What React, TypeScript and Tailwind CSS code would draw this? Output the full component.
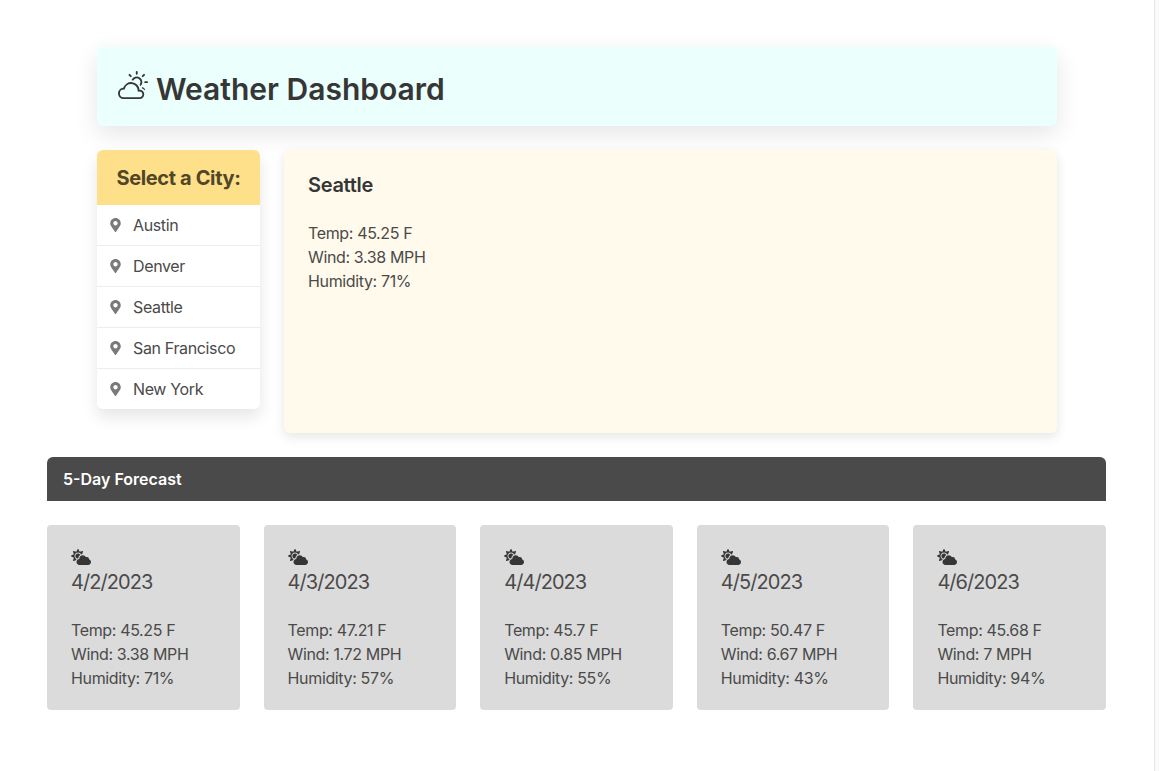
import { BsCloudSun } from "react-icons/bs";
import { FaCloudSun, FaMapMarkerAlt } from "react-icons/fa";

const cities = ["Austin", "Denver", "Seattle", "San Francisco", "New York"];

const forecast = [
  { date: "4/2/2023", temp: "45.25", wind: "3.38", humidity: "71" },
  { date: "4/3/2023", temp: "47.21", wind: "1.72", humidity: "57" },
  { date: "4/4/2023", temp: "45.7", wind: "0.85", humidity: "55" },
  { date: "4/5/2023", temp: "50.47", wind: "6.67", humidity: "43" },
  { date: "4/6/2023", temp: "45.68", wind: "7", humidity: "94" },
];

export default function App() {
  return (
    <div className="flex h-[771px] overflow-hidden bg-white font-['Inter',sans-serif] text-[16px] leading-[24px] tracking-[-0.36px] text-[#4a4a4a]">
      <main className="min-w-0 flex-1 pl-[47px] pr-[48px] pt-[47px]">
        {/* Top section */}
        <div className="pl-[50px] pr-[49px]">
          <header className="flex h-[79px] items-center rounded-md bg-[#ebfffc] px-5 shadow-[0_8px_24px_rgba(10,10,10,0.1)]">
            <BsCloudSun className="mb-[6px] mr-[7px] h-[30px] w-[32px] text-[#363636]" />
            <h1 className="mt-[5px] text-[30px] font-semibold leading-10 tracking-normal text-[#363636]">Weather Dashboard</h1>
          </header>

          <div className="mt-6 flex items-start gap-6">
            {/* City list */}
            <nav className="w-[163px] shrink-0 overflow-hidden rounded-md bg-white shadow-[0_8px_16px_rgba(10,10,10,0.1)]">
              <h2 className="bg-[#ffe08a] pb-[13px] pt-[15px] text-center text-[20px] font-bold leading-[27px] tracking-[-0.36px] text-[#514626]">
                Select a City:
              </h2>
              {cities.map((city) => (
                <div key={city} className="flex h-[41px] items-center border-b border-[#ededed] pl-[13px] last:h-10 last:border-b-0">
                  <FaMapMarkerAlt className="mr-[12px] h-[14px] w-[11px] text-[#7a7a7a]" />
                  <span>{city}</span>
                </div>
              ))}
            </nav>

            {/* Current weather */}
            <section className="h-[283px] flex-1 rounded-md bg-[#fffaeb] px-6 py-5 shadow-[0_4px_12px_rgba(10,10,10,0.1)]">
              <h2 className="text-[20px] font-semibold leading-[30px] tracking-[-0.3px] text-[#363636]">Seattle</h2>
              <div className="mt-[21px]">
                <p>Temp: 45.25 F</p>
                <p>Wind: 3.38 MPH</p>
                <p>Humidity: 71%</p>
              </div>
            </section>
          </div>
        </div>

        {/* 5-day forecast */}
        <h2 className="mt-6 flex h-11 items-center rounded-t-md bg-[#4a4a4a] px-4 font-semibold tracking-normal text-white">5-Day Forecast</h2>
        <div className="mt-6 grid grid-cols-5 gap-6">
          {forecast.map((day) => (
            <article key={day.date} className="h-[185px] rounded bg-[#dbdbdb] px-6 pt-6">
              <FaCloudSun className="h-[16px] w-[20px] text-[#363636]" />
              <div className="mt-[2px] text-[20px] leading-[30px] tracking-[-0.95px]">{day.date}</div>
              <div className="mt-[21px]">
                <p>Temp: {day.temp} F</p>
                <p>Wind: {day.wind} MPH</p>
                <p>Humidity: {day.humidity}%</p>
              </div>
            </article>
          ))}
        </div>
      </main>

      {/* Scrollbar gutter */}
      <div className="w-[5px] shrink-0 border-l border-[#e5e5e5] bg-[#fafafa]" />
    </div>
  );
}
